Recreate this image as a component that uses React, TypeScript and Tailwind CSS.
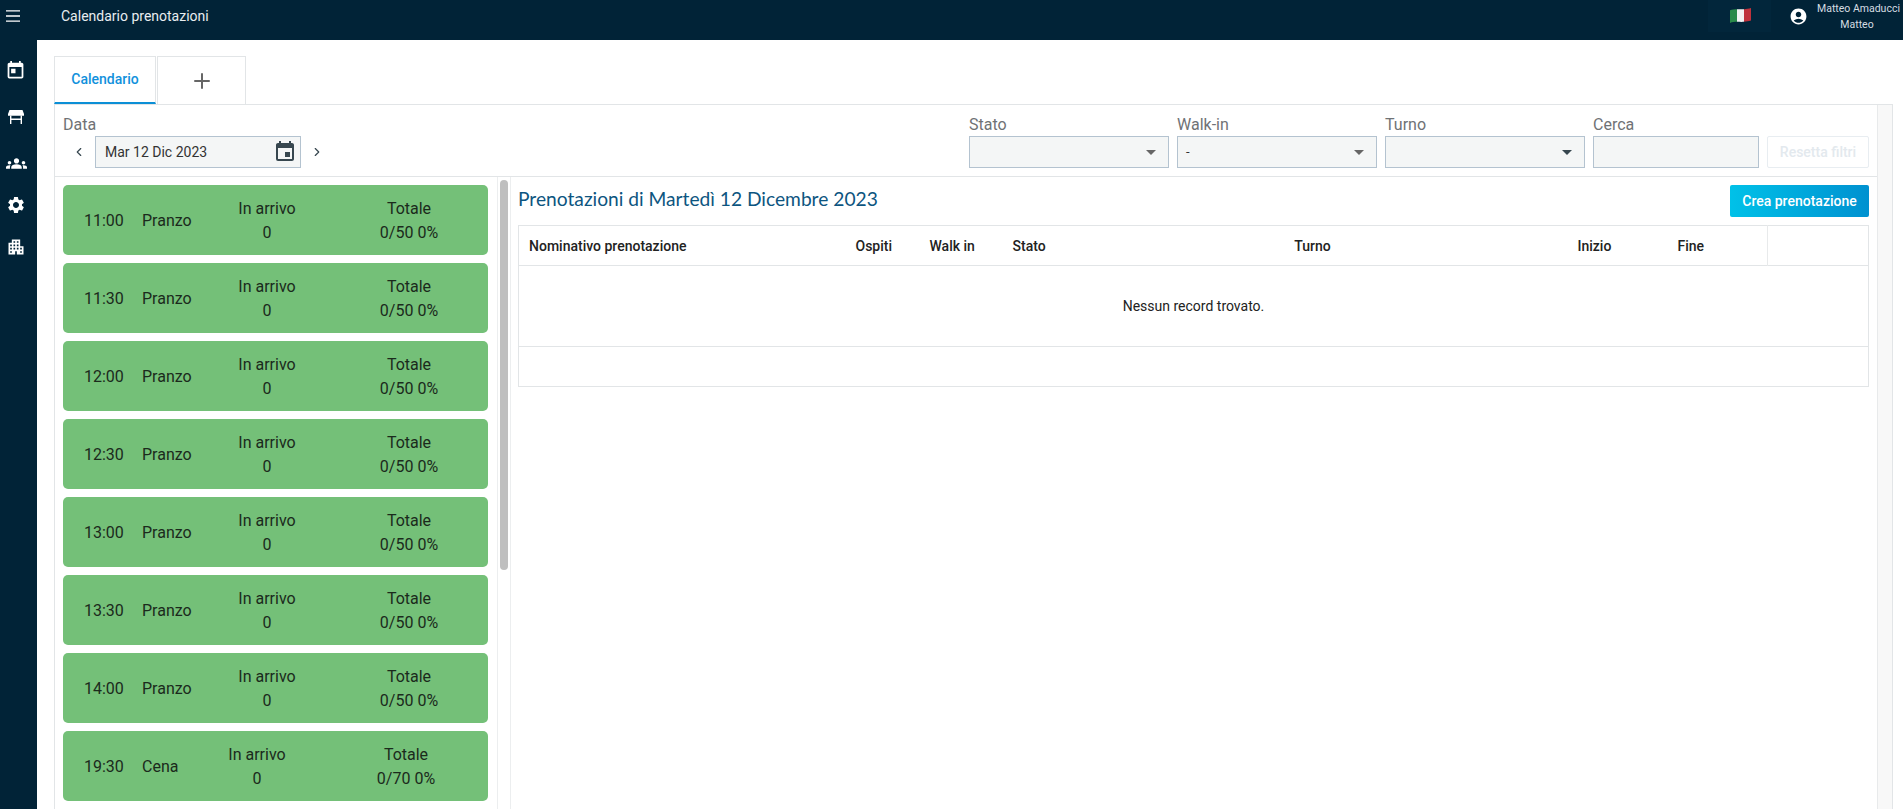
import React from 'react';
import { ChevronLeft, ChevronRight, Plus } from 'lucide-react';
import {
  MdToday,
  MdEvent,
  MdGroups,
  MdSettings,
  MdApartment,
  MdAccountCircle,
} from 'react-icons/md';

const slots = [
  { time: '11:00', turn: 'Pranzo', total: '0/50 0%' },
  { time: '11:30', turn: 'Pranzo', total: '0/50 0%' },
  { time: '12:00', turn: 'Pranzo', total: '0/50 0%' },
  { time: '12:30', turn: 'Pranzo', total: '0/50 0%' },
  { time: '13:00', turn: 'Pranzo', total: '0/50 0%' },
  { time: '13:30', turn: 'Pranzo', total: '0/50 0%' },
  { time: '14:00', turn: 'Pranzo', total: '0/50 0%' },
  { time: '19:30', turn: 'Cena', total: '0/70 0%' },
];

function MenuIcon() {
  return (
    <svg width="14" height="12" viewBox="0 0 14 12" stroke="currentColor" strokeWidth="1.3">
      <path d="M0 .8h14M0 6h14M0 11.2h14" />
    </svg>
  );
}

function TableIcon() {
  return (
    <svg width="16" height="14" viewBox="0 0 16 14" fill="none" className="text-white">
      <path d="M1.5 0h13L16 4v1.8H0V4z" fill="currentColor" />
      <path d="M2.7 5.5V14M13.3 5.5V14M2.7 9.2h10.6" stroke="currentColor" strokeWidth="1.4" />
    </svg>
  );
}

function Flag() {
  return (
    <svg width="21" height="15" viewBox="0 0 21 15">
      <path d="M0 2.2 C2 1.2 5 1.2 7 1.2 V13.8 C5 13.8 2 14 0 15z" fill="#2a8a4a" />
      <path d="M7 1.2 C9 1.2 12 1.4 14 1.2 V13.8 C12 14 9 13.8 7 13.8z" fill="#f3f3f3" />
      <path d="M14 1.2 C16 1 19 0.6 21 0 V12.6 C19 13.2 16 13.6 14 13.8z" fill="#c0323c" />
    </svg>
  );
}

function Caret({ dark }: { dark?: boolean }) {
  return (
    <span
      className={`h-0 w-0 border-x-[5px] border-t-[5px] border-x-transparent ${
        dark ? 'border-t-[#37474f]' : 'border-t-[#666666]'
      }`}
    />
  );
}

function Filter({
  label,
  value,
  width,
  dark,
}: {
  label: string;
  value?: string;
  width: string;
  dark?: boolean;
}) {
  return (
    <div className={`flex flex-col ${width}`}>
      <label className="h-[23px] text-[16px] leading-[24px] text-[#6f7275]">{label}</label>
      <div className="flex h-[32px] items-center justify-between border border-[#b4c3d0] bg-[#f4f6f6] pl-[8px] pr-[12px] text-[13px] text-[#333]">
        <span>{value}</span>
        <Caret dark={dark} />
      </div>
    </div>
  );
}

function SlotCard({ time, turn, total }: { time: string; turn: string; total: string }) {
  const lunch = turn === 'Pranzo';
  return (
    <div className="flex h-[70px] shrink-0 items-center rounded-[5px] bg-[#74c078] pt-[1px] text-[16px] leading-[24px] text-[#1b2a1c]">
      <span className="ml-[21px] w-[58px]">{time}</span>
      <span className={lunch ? 'w-[96px]' : 'w-[86px]'}>{turn}</span>
      <div className="w-[58px] text-center">
        <div>In arrivo</div>
        <div>0</div>
      </div>
      <div className={`w-[60px] text-center ${lunch ? 'ml-[83px]' : 'ml-[90px]'}`}>
        <div>Totale</div>
        <div className="-mx-[2px] whitespace-nowrap">{total}</div>
      </div>
    </div>
  );
}

export default function App() {
  return (
    <div className="flex h-[809px] w-[1903px] flex-col overflow-hidden bg-white font-['Roboto',sans-serif]">
      <header className="flex h-[40px] shrink-0 items-center bg-[#012337] pb-[8px] text-white">
        <span className="ml-[6px] flex">
          <MenuIcon />
        </span>
        <span className="ml-[41px] text-[14px] text-[#e8edf0]">Calendario prenotazioni</span>
        <div className="ml-auto flex h-full items-center pr-[6px]">
          <div className="flex h-[32px] w-[63px] items-center justify-center bg-[#02263b]">
            <span className="mb-[2px] ml-[2px] flex">
              <Flag />
            </span>
          </div>
          <MdAccountCircle className="ml-[18px] text-[19px]" />
          <div className="ml-[9px] w-[80px] pt-[1px] text-center text-[10.5px] leading-[16px] text-[#d5dde2]">
            <div className="whitespace-nowrap">Matteo Amaducci</div>
            <div>Matteo</div>
          </div>
        </div>
      </header>

      <div className="flex min-h-0 flex-1">
        <nav className="flex w-[37px] shrink-0 flex-col items-center bg-[#012337] pr-[5px] pt-[9px] text-white">
          <div className="mr-[2px] flex h-[42px] items-center">
            <MdToday className="text-[21px]" />
          </div>
          <div className="mt-[5px] flex h-[42px] items-center">
            <TableIcon />
          </div>
          <div className="mt-[4px] flex h-[42px] items-center">
            <MdGroups className="text-[21px]" />
          </div>
          <div className="flex h-[42px] items-center">
            <MdSettings className="text-[20px]" />
          </div>
          <div className="flex h-[42px] items-center">
            <MdApartment className="text-[20px]" />
          </div>
        </nav>

        <main className="flex min-w-0 flex-1 flex-col pl-[17px] pr-[10px] pt-[16px]">
          <div className="flex h-[48px] shrink-0">
            <div className="flex w-[102px] items-center justify-center border-x border-t border-[#e2e5e7] border-b-[2px] border-b-[#0b8fd6] text-[14px] font-medium text-[#1191dc]">
              Calendario
            </div>
            <div className="ml-[1px] flex w-[89px] items-center justify-center border-x border-t border-[#e2e5e7] text-[#666666]">
              <Plus size={24} strokeWidth={2} />
            </div>
          </div>

          <div className="flex min-h-0 flex-1 border-x border-t border-[#e2e5e7]">
            <div className="flex min-w-0 flex-1 flex-col">
              <div className="flex h-[72px] shrink-0 items-start justify-between border-b border-[#e2e5e7] px-[8px] pt-[8px]">
                <div className="flex flex-col">
                  <label className="h-[23px] text-[16px] leading-[24px] text-[#6f7275]">Data</label>
                  <div className="flex items-center">
                    <ChevronLeft size={14} className="ml-[9px] text-[#37474f]" />
                    <div className="ml-[9px] flex h-[32px] w-[206px] items-center justify-between border border-[#b4c3d0] bg-[#f4f6f6] pl-[9px] pr-[3px] text-[14px] text-[#333]">
                      <span>Mar 12 Dic 2023</span>
                      <MdEvent className="text-[24px] text-[#37474f]" />
                    </div>
                    <ChevronRight size={14} className="ml-[9px] text-[#37474f]" />
                  </div>
                </div>

                <div className="flex">
                  <Filter label="Stato" width="w-[200px]" />
                  <Filter label="Walk-in" value="-" width="ml-[8px] w-[200px]" />
                  <Filter label="Turno" width="ml-[8px] w-[200px]" dark />
                  <div className="ml-[8px] flex w-[166px] flex-col">
                    <label className="h-[23px] text-[16px] leading-[24px] text-[#6f7275]">Cerca</label>
                    <div className="h-[32px] border border-[#b4c3d0] bg-[#f4f6f6]" />
                  </div>
                  <button className="ml-[8px] mt-[23px] h-[32px] w-[102px] rounded-[2px] border border-[#e8edf1] text-[14px] font-medium text-[#e3e9ee]">
                    Resetta filtri
                  </button>
                </div>
              </div>

              <div className="flex min-h-0 flex-1">
                <div className="flex w-[456px] shrink-0 overflow-hidden">
                  <div className="flex min-w-0 flex-1 flex-col gap-[8px] pl-[8px] pr-[9px] pt-[8px]">
                    {slots.map((s) => (
                      <SlotCard key={s.time} {...s} />
                    ))}
                  </div>
                  <div className="w-[14px] shrink-0 border-x border-[#eceeef] pl-[2px] pt-[3px]">
                    <div className="h-[390px] w-[8px] rounded-[4px] bg-[#bfbfbf]" />
                  </div>
                </div>

                <div className="flex min-w-0 flex-1 flex-col pl-[7px] pr-[8px] pt-[8px]">
                  <div className="flex h-[32px] shrink-0 items-center justify-between">
                    <h2 className="-mt-[4px] font-['Lato',sans-serif] text-[19.2px] font-normal text-[#0d5580]">
                      Prenotazioni di Martedì 12 Dicembre 2023
                    </h2>
                    <button className="h-[32px] w-[139px] rounded-[2px] bg-gradient-to-r from-[#00c1e8] to-[#0091d0] text-[14px] font-medium text-white">
                      Crea prenotazione
                    </button>
                  </div>

                  <table className="mt-[8px] w-full table-fixed border-collapse border border-[#e2e5e7] text-[14px] text-[#222]">
                    <thead>
                      <tr className="h-[40px] border-b border-[#e2e5e7] text-left">
                        <th className="w-[336px] pl-[10px] pt-[2px] font-medium">Nominativo prenotazione</th>
                        <th className="w-[73px] pl-[1px] pt-[2px] font-medium">Ospiti</th>
                        <th className="w-[84px] pl-[2px] pt-[2px] font-medium">Walk in</th>
                        <th className="w-[100px] pl-[1px] pt-[2px] font-medium">Stato</th>
                        <th className="w-[402px] pt-[2px] text-center font-medium">Turno</th>
                        <th className="w-[164px] pl-[64px] pt-[2px] font-medium">Inizio</th>
                        <th className="w-[90px] pt-[2px] font-medium">Fine</th>
                        <th className="border-l border-[#e8eaeb] font-medium" />
                      </tr>
                    </thead>
                    <tbody>
                      <tr className="h-[81px] border-b border-[#e2e5e7]">
                        <td colSpan={8} className="pt-[1px] text-center">
                          Nessun record trovato.
                        </td>
                      </tr>
                      <tr className="h-[40px]">
                        <td colSpan={8} />
                      </tr>
                    </tbody>
                  </table>
                </div>
              </div>
            </div>
            <div className="w-[15px] shrink-0 border-l border-[#e8eaeb] bg-[#f8f8f8]" />
          </div>
        </main>
      </div>
    </div>
  );
}
